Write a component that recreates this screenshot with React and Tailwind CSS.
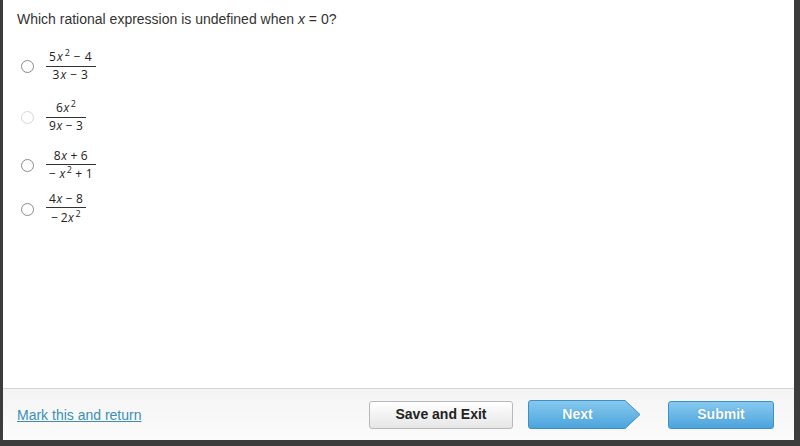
import React from "react";

function Radio({ faded }) {
  return (
    <span
      className={
        "inline-block w-[13px] h-[13px] rounded-full border bg-white shrink-0 " +
        (faded ? "border-[#d6d6d6]" : "border-[#8a8a8a]")
      }
    />
  );
}

function Frac({ num, den, denPad = "pt-[1px]" }) {
  return (
    <span className="inline-flex flex-col items-center font-['Open_Sans',sans-serif] text-[12px] leading-[14px] text-[#222] tracking-[0.5px]">
      <span className="px-[3px] pb-[1px] whitespace-nowrap">{num}</span>
      <span className="self-stretch border-t border-[#333]" />
      <span className={"px-[3px] whitespace-nowrap " + denPad}>{den}</span>
    </span>
  );
}

const X = () => <i className="italic">x</i>;
const Sq = () => (
  <span className="text-[9px] relative -top-[5px] ml-[1px]">2</span>
);
const Op = ({ c }) => <span className="mx-[3px]">{c}</span>;

export default function App() {
  return (
    <div className="w-[800px] h-[446px] bg-[#3c3c3c] font-['Liberation_Sans',Arial,sans-serif]">
      <div className="ml-[3px] w-[791px] h-[440px] bg-white flex flex-col">
        <div className="flex-1 pl-[14px] pt-[10px]">
          <p className="text-[14px] leading-[18px] text-[#333]">
            Which rational expression is undefined when <i>x</i> = 0?
          </p>
          <div className="mt-[22px] flex flex-col pl-[4px]">
            <div className="flex items-center gap-[12px]">
              <Radio />
              <Frac
                num={<span className="tracking-[1px]">5<X /><Sq /><Op c="−" />4</span>}
                den={<span className="tracking-[1px]">3<X /><Op c="−" />3</span>}
              />
            </div>
            <div className="flex items-center gap-[12px] mt-[19px]">
              <Radio faded />
              <Frac
                num={<span>6<X /><Sq /></span>}
                den={<span>9<X /><Op c="−" />3</span>}
              />
            </div>
            <div className="flex items-center gap-[12px] mt-[16px]">
              <Radio />
              <Frac
                num={<span>8<X /><Op c="+" />6</span>}
                den={<span>−<span className="ml-[3px]" /><X /><Sq /><Op c="+" />1</span>}
                denPad="pt-[2px]"
              />
            </div>
            <div className="flex items-center gap-[12px] mt-[10px]">
              <Radio />
              <Frac
                num={<span>4<X /><Op c="−" />8</span>}
                den={<span>−<span className="ml-[2px]" />2<X /><Sq /></span>}
                denPad="pt-[3px]"
              />
            </div>
          </div>
        </div>
        <div className="h-[52px] border-t border-[#d4d4d4] bg-gradient-to-b from-[#f4f4f4] to-[#fbfbfb] flex items-center pl-[14px] pr-[20px]">
          <a className="text-[14px] text-[#3b8fb5] underline mt-[1px]" href="#">
            Mark this and return
          </a>
          <div className="ml-auto flex items-center">
            <button className="w-[144px] h-[28px] rounded-[3px] border border-[#b8b8b8] bg-gradient-to-b from-[#ffffff] to-[#e6e6e6] text-[14px] font-bold text-[#222]">
              Save and Exit
            </button>
            <button className="relative ml-[15px] w-[113px] h-[29px] text-[14px] font-bold text-white [text-shadow:0_0_1px_#3a87b8]">
              <svg className="absolute inset-0" width="113" height="29" viewBox="0 0 113 29">
                <defs>
                  <linearGradient id="nb" x1="0" y1="0" x2="0" y2="1">
                    <stop offset="0" stopColor="#86c9ef" />
                    <stop offset="1" stopColor="#4ba4dc" />
                  </linearGradient>
                </defs>
                <path
                  d="M3 0.5 H97 L112 14.5 L97 28.5 H3 Q0.5 28.5 0.5 26 V3 Q0.5 0.5 3 0.5 Z"
                  fill="url(#nb)"
                  stroke="#3f8ec6"
                />
              </svg>
              <span className="relative pr-[14px]">Next</span>
            </button>
            <button className="ml-[27px] w-[106px] h-[28px] rounded-[3px] border border-[#3f8ec6] bg-gradient-to-b from-[#86c9ef] to-[#4ba4dc] text-[14px] font-bold text-white [text-shadow:0_0_1px_#3a87b8]">
              Submit
            </button>
          </div>
        </div>
      </div>
    </div>
  );
}
